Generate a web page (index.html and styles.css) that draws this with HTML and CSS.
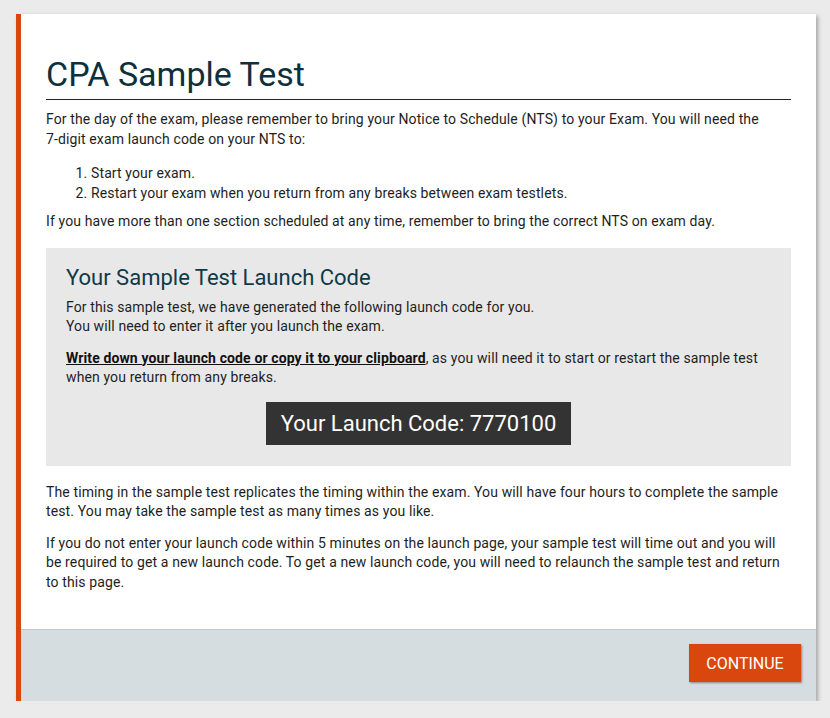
FILE: index.html
```html
<!DOCTYPE html>
<html lang="en">
<head>
  <meta charset="UTF-8">
  <meta name="viewport" content="width=device-width, initial-scale=1.0">
  <title>CPA Sample Test</title>
  <link rel="stylesheet" href="styles.css">
</head>
<body>

<div class="card">
  <div class="cardBody">
    <h1 class="pageTitle">CPA Sample Test</h1>
    <p>For the day of the exam, please remember to bring your Notice to Schedule (NTS) to your Exam. You will need the <span class="noWrap">7-digit</span> exam launch code on your NTS to:</p>
    <ol class="steps">
      <li>Start your exam.</li>
      <li>Restart your exam when you return from any breaks between exam testlets.</li>
    </ol>
    <p>If you have more than one section scheduled at any time, remember to bring the correct NTS on exam day.</p>

    <div class="codePanel">
      <h2>Your Sample Test Launch Code</h2>
      <p>For this sample test, we have generated the following launch code for you.<br>
      You will need to enter it after you launch the exam.</p>
      <p><a class="copyLink" href="#">Write down your launch code or copy it to your clipboard</a>, as you will need it to start or restart the sample test when you return from any breaks.</p>
      <div class="codeRow">
        <span class="launchCode">Your Launch Code: 7770100</span>
      </div>
    </div>

    <p>The timing in the sample test replicates the timing within the exam. You will have four hours to complete the sample test. You may take the sample test as many times as you like.</p>
    <p>If you do not enter your launch code within 5 minutes on the launch page, your sample test will time out and you will be required to get a new launch code. To get a new launch code, you will need to relaunch the sample test and return to this page.</p>
  </div>
  <div class="cardFooter">
    <button class="continueBtn">Continue</button>
  </div>
</div>

</body>
</html>
```

FILE: styles.css
```css
body {
  font-family: Roboto, "Liberation Sans", sans-serif;
  background-color: #ebebeb;
  margin: 0;
  padding: 14px 0 0 16px;
  color: #1e1e1e;
}

.card {
  width: 795px;
  background-color: #fff;
  border-left: 5px solid #d9470f;
  box-shadow: 2px 2px 4px rgba(0, 0, 0, 0.3);
}

.cardBody {
  padding: 40px 25px 25px 25px;
}

.cardBody p {
  font-size: 14px;
  line-height: 19.5px;
  letter-spacing: 0.12px;
  margin: 0 0 12px 0;
}

.noWrap {
  white-space: nowrap;
}

.pageTitle {
  font-size: 34px;
  font-weight: 400;
  line-height: 40px;
  color: #0e2f3c;
  margin: 0 0 10px 0;
  padding-bottom: 5px;
  border-bottom: 1px solid #0e2f3c;
}

.steps {
  font-size: 14px;
  line-height: 20px;
  letter-spacing: 0.12px;
  margin: 14px 0 9px 0;
  padding-left: 45px;
}

.steps + p {
  margin-bottom: 10px;
}

.codePanel {
  background-color: #e8e8e8;
  padding: 15px 20px 21px 20px;
  margin: 16px 0 17px 0;
}

.codePanel h2 {
  font-size: 22px;
  font-weight: 400;
  line-height: 30px;
  color: #0e3a49;
  margin: 0 0 5px 0;
}

.copyLink {
  color: #111;
  font-weight: 700;
  text-decoration: underline;
}

.codeRow {
  display: flex;
  justify-content: center;
  padding-top: 2px;
}

.launchCode {
  background-color: #333;
  color: #fff;
  font-size: 22px;
  line-height: 43px;
  padding: 0 15px;
}

.cardFooter {
  background-color: #d6dde0;
  border-top: 1px solid #c4cacd;
  padding: 14px 15px 19px 15px;
  display: flex;
  justify-content: flex-end;
}

.continueBtn {
  font-family: Roboto, "Liberation Sans", sans-serif;
  font-size: 16px;
  text-transform: uppercase;
  background-color: #d9470f;
  color: #fff;
  border: none;
  height: 38px;
  width: 112px;
  padding: 0;
  box-shadow: 1px 1px 2px rgba(0, 0, 0, 0.4);
  cursor: pointer;
}
```
